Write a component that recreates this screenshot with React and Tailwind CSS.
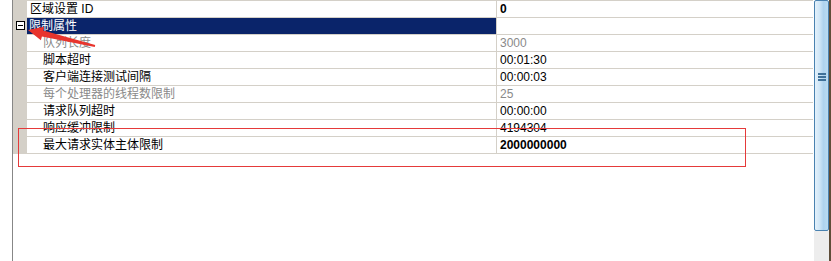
const rows = [
  { name: "区域设置 ID", value: "0", bold: true, top: true },
  { name: "限制属性", cat: true },
  { name: "队列长度", value: "3000", disabled: true },
  { name: "脚本超时", value: "00:01:30" },
  { name: "客户端连接测试间隔", value: "00:00:03" },
  { name: "每个处理器的线程数限制", value: "25", disabled: true },
  { name: "请求队列超时", value: "00:00:00" },
  { name: "响应缓冲限制", value: "4194304" },
  { name: "最大请求实体主体限制", value: "2000000000", bold: true },
];

const Row = ({ row }) => {
  const color = row.disabled ? "text-[#8a8a8a]" : "text-black";
  return (
    <div className="flex h-[17px]">
      <div className="w-[14px] bg-[#d4d0c8] flex items-start justify-center">
        {row.cat && (
          <div className="mt-[3px] ml-[1px] w-[9px] h-[9px] border border-black bg-white flex items-center justify-center">
            <div className="w-[5px] h-px bg-black" />
          </div>
        )}
      </div>
      <div className="flex flex-1 border-b border-[#d4d0c8]">
        <div
          className={
            row.cat
              ? "w-[470px] border-r border-[#d4d0c8] bg-[#0a246a] text-white pl-[2px] leading-[16px]"
              : row.top
              ? "w-[470px] border-r border-[#d4d0c8] pl-[3px] leading-[16px] text-black"
              : `w-[470px] border-r border-[#d4d0c8] pl-[16px] leading-[16px] ${color}`
          }
        >
          {row.name}
        </div>
        <div className={`flex-1 pl-[3px] leading-[16px] ${color} ${row.bold ? "font-bold" : ""}`}>
          {row.value}
        </div>
      </div>
    </div>
  );
};

export default function App() {
  return (
    <div className="relative w-[831px] h-[261px] bg-white flex overflow-hidden text-[12px] font-['Liberation_Sans','Noto_Sans_CJK_SC',sans-serif]">
      <div className="w-[12px]" />
      <div className="w-px bg-[#878787]" />
      <div className="w-[800px] flex flex-col">
        <div className="h-px bg-[#d4d0c8]" />
        {rows.map((r) => (
          <Row key={r.name} row={r} />
        ))}
      </div>
      <div className="w-px" />
      <div className="w-[15px] flex flex-col">
        <div className="h-[231px] border border-[#4a82b0] rounded-[2px] bg-[linear-gradient(to_right,#e4f1fb,#cfe6f7_35%,#aed3ef_65%,#b9dbf2)] flex flex-col items-center pt-[72px]">
          <div className="w-[8px] h-[2px] bg-[#3f7199] mb-px" />
          <div className="w-[8px] h-[2px] bg-[#3f7199] mb-px" />
          <div className="w-[8px] h-[2px] bg-[#3f7199]" />
        </div>
        <div className="flex-1 bg-[#ededed]" />
      </div>
      <div className="w-[2px] bg-[#5e4d39]" />

      <div className="absolute left-[18px] top-[128px] w-[728px] h-[39px] border border-[#e53a3a] pointer-events-none" />
      <svg className="absolute left-0 top-0 pointer-events-none" width="831" height="261">
        <polygon
          points="28,30 44.2,26.7 43.2,30.5 95.2,45 94.8,47 41.9,36.4 40.9,40.2"
          fill="#e8342d"
        />
      </svg>
    </div>
  );
}
